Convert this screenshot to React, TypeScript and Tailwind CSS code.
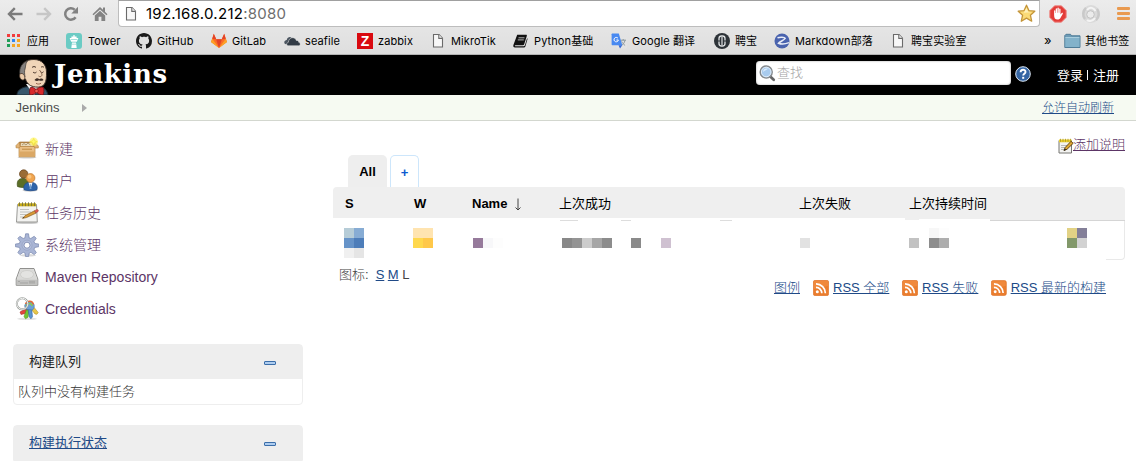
import React from "react";

const UI = "font-['Inter','Noto_Sans_CJK_SC',sans-serif]";
const BODY = "font-['Liberation_Sans','Noto_Sans_CJK_SC',sans-serif]";

/* ---------- browser icons ---------- */

function Back({ light }: { light?: boolean }) {
  return (
    <svg width="16" height="14" viewBox="0 0 16 14" fill="none" stroke={light ? "#c6c6c6" : "#7b7b7b"} strokeWidth="2.4">
      <path d={light ? "M0.5 7H14M8.2 1.2L14 7l-5.8 5.8" : "M15.5 7H2M7.8 1.2L2 7l5.8 5.8"} />
    </svg>
  );
}

function Reload() {
  return (
    <svg width="16" height="16" viewBox="0 0 16 16">
      <path d="M12.6 11.2A5.7 5.7 0 1 1 11.7 3.7" fill="none" stroke="#828282" strokeWidth="2.5" />
      <path d="M15 0.8V7.5H8.3z" fill="#828282" />
    </svg>
  );
}

function Home() {
  return (
    <svg width="16" height="16" viewBox="0 0 16 16" fill="#838383">
      <path d="M8 1L0.5 8.2l1 1.1L8 3.4l6.5 5.9 1-1.1L13 5.8V1.5h-2v2.3z" />
      <path d="M8 4.8L2.8 9.5V15h3.8v-4.3h2.8V15h3.8V9.5z" />
    </svg>
  );
}

function Page() {
  return (
    <svg width="12" height="16" viewBox="0 0 12 16" fill="#f7f7f7" stroke="#6a6a6a" strokeWidth="1.1">
      <path d="M1.500 1.500h5.500l3.500 3.700v8.800h-9z" />
      <path d="M6.800 1.500v3.900h3.700" />
    </svg>
  );
}

function AppsGrid() {
  const colors = ["#f23b3b", "#f23b3b", "#f23b3b", "#1f9d57", "#2f86f5", "#f5a623", "#1f9d57", "#f5a623", "#f5a623"];
  return (
    <svg width="14" height="14" viewBox="0 0 14 14">
      {colors.map((c, i) => (
        <rect key={i} x={(i % 3) * 5} y={Math.floor(i / 3) * 5} width="3" height="3" fill={c} />
      ))}
    </svg>
  );
}

function Tower() {
  return (
    <svg width="16" height="16" viewBox="0 0 16 16">
      <rect width="16" height="16" rx="3" fill="#6bcbc4" />
      <path d="M7.4 2h1.2v1.5h2v1.6h1.8l-1.6 3.6H5.2L3.6 5.1h1.8V3.5h2z" fill="#fff" />
      <path d="M6 9.4h4l.7 5.6H5.3z" fill="#fff" />
      <path d="M4.8 6.5h6.4M5.8 11.2h4.4" stroke="#6bcbc4" strokeWidth=".6" />
    </svg>
  );
}

function GitHub() {
  return (
    <svg width="16" height="16" viewBox="0 0 16 16" fill="#1b1b1b">
      <path d="M8 0C3.58 0 0 3.58 0 8c0 3.54 2.29 6.53 5.47 7.59.4.07.55-.17.55-.38 0-.19-.01-.82-.01-1.49-2.01.37-2.53-.49-2.69-.94-.09-.23-.48-.94-.82-1.13-.28-.15-.68-.52-.01-.53.63-.01 1.08.58 1.23.82.72 1.21 1.87.87 2.33.66.07-.52.28-.87.51-1.07-1.78-.2-3.64-.89-3.64-3.95 0-.87.31-1.59.82-2.15-.08-.2-.36-1.02.08-2.12 0 0 .67-.21 2.2.82.64-.18 1.32-.27 2-.27s1.36.09 2 .27c1.53-1.04 2.2-.82 2.2-.82.44 1.1.16 1.92.08 2.12.51.56.82 1.27.82 2.15 0 3.07-1.87 3.75-3.65 3.95.29.25.54.73.54 1.48 0 1.07-.01 1.93-.01 2.2 0 .21.15.46.55.38A8.01 8.01 0 0 0 16 8c0-4.42-3.58-8-8-8z" />
    </svg>
  );
}

function GitLab() {
  return (
    <svg width="16" height="16" viewBox="0 0 16 16">
      <path d="M8 15L0 9l2.8-8.3L5.3 6.2h5.4l2.5-5.500L16 9z" fill="#fc6d26" />
      <path d="M8 15L5.1 6.2h5.8z" fill="#e24329" />
      <path d="M8 15L0 9l1.2-3.2zM8 15l8-6-1.2-3.2z" fill="#fca326" />
      <path d="M1.3 5.8L2.8.7l2.4 5.5zM14.7 5.8L13.2.7l-2.4 5.5z" fill="#e24329" />
    </svg>
  );
}

function Clouds() {
  return (
    <svg width="17" height="16" viewBox="0 0 17 16">
      <path d="M0.3 9.8C0 7.800 1.800 7 2.700 7C3.500 4 6 3.500 7.500 4.600L3 11C1.300 11.500.5 10.800.3 9.800z" fill="#4b5560" />
      <path d="M4.200 12.700C2.200 12.700 2.200 9.700 4.300 9.300C4.600 6.600 6.300 4.700 8.700 4.700C10.700 4.700 11.800 5.900 12.300 7.500C14 7.200 14.700 8.300 14.700 9.300C16.600 9.500 16.800 12.700 14.700 12.700z" fill="#333c46" stroke="#e5e5e5" strokeWidth=".5" />
    </svg>
  );
}

function Book() {
  return (
    <svg width="15" height="16" viewBox="0 0 15 16">
      <path d="M4.200 1.800h8.800c.8 0 1 .5.8 1.100l-2.600 8.300c-.2.700-.7 1-1.400 1H2.400c-.8.1-.8 1 0 1h8.200c.7 0 1.100-.4 1.300-1l2.200-7c.5.3.5.8.3 1.400l-2 6.600c-.3 1-1 1.300-1.900 1.300H2C.500 14.500 0 13.300.4 12z" fill="#111" />
      <path d="M5.500 4.800h6M4.800 6.900h6" stroke="#ddd" strokeWidth=".8" />
    </svg>
  );
}

function Translate() {
  return (
    <svg width="17" height="16" viewBox="0 0 17 16">
      <rect x="5.500" y="4" width="10.500" height="11.500" rx="1" fill="#e3e3e3" />
      <path d="M9.500 7.200h5.500M12.200 6v1.200M14 7.400c-.6 2.600-2 4-3.600 5M10.700 8.400c.9 1.900 2 3 3.400 4" stroke="#8b979c" fill="none" />
      <path d="M1 .5h6.800l3.500 11.800H1.600c-.6 0-1-.4-1-1V1.200z" fill="#4889f1" />
      <path d="M7.500 12.300h3.800L9 15.500z" fill="#3367d6" />
      <path d="M7 5.300A2.200 2.200 0 1 0 7.400 7H5.400" fill="none" stroke="#fff" strokeWidth="1" />
    </svg>
  );
}

function Coin() {
  return (
    <svg width="16" height="16" viewBox="0 0 16 16">
      <circle cx="8" cy="8" r="8" fill="#2d3338" />
      <rect x="5" y="3" width="6" height="10" rx="2.500" fill="none" stroke="#dfe2e4" strokeWidth="1.300" />
      <path d="M8 4v8" stroke="#dfe2e4" strokeWidth="1.200" />
      <path d="M4 8h2M10 8h2" stroke="#2d3338" strokeWidth="1.200" />
    </svg>
  );
}

function MarkdownLogo() {
  return (
    <svg width="16" height="16" viewBox="0 0 16 16">
      <circle cx="8" cy="8" r="7.500" fill="#4a63ae" />
      <path d="M3.500 4.800C6 3.800 10.500 4 11.300 5.300C10.500 7 6 8.500 4.500 10.200C7 11.300 11 11.200 15 9.600" fill="none" stroke="#e8ecf6" strokeWidth="1.500" />
    </svg>
  );
}

function Folder() {
  return (
    <svg width="17" height="16" viewBox="0 0 17 16">
      <path d="M.8 14.500V2.500L2 1.300h4.500l1.200 1.500h8.300v11.700z" fill="#6c9ab5" stroke="#4f7c97" />
      <path d="M1.300 5h14.200v9H1.300z" fill="#83b2ca" />
      <path d="M1.300 4.500h14.200" stroke="#a9cddd" />
    </svg>
  );
}

function Star() {
  return (
    <svg width="19" height="19" viewBox="0 0 19 19">
      <path d="M9.500 1.200l2.400 5.400 5.900.6-4.400 4 1.300 6-5.200-3.100-5.200 3.100 1.300-6-4.400-4 5.900-.6z" fill="#fbdb78" stroke="#c4953a" strokeWidth="1.300" strokeLinejoin="round" />
      <path d="M9.500 3.800l1.600 3.900 3.700.5-8 .6z" fill="#fff0b8" />
    </svg>
  );
}

function AdBlock() {
  return (
    <svg width="18" height="18" viewBox="0 0 18 18">
      <path d="M5.600.8h6.800l4.800 4.800v6.800l-4.800 4.800H5.600L.8 12.400V5.600z" fill="#e33b37" stroke="#ee8a86" strokeWidth="1" />
      <path d="M5.100 10V5.800c0-.9 1.200-.9 1.200 0V8h.4V4c0-1 1.300-1 1.300 0v3.700h.4V3.200c0-1 1.400-1 1.400 0v4.500h.4V4.300c0-1 1.300-1 1.300 0v5.200l1.200-1.400c.7-.7 1.500 0 1 .8l-2 3.600c-.7 1.500-1.700 2-3.200 2C6 14.500 5.100 13 5.100 10z" fill="#fff" />
    </svg>
  );
}

function GreyDisc() {
  return (
    <svg width="20" height="20" viewBox="0 0 20 20">
      <circle cx="10" cy="10" r="9" fill="#dadada" />
      <path d="M4 15A8 8 0 0 1 5 4M16 5a8 8 0 0 1-1 11" stroke="#c9c9c9" fill="none" strokeWidth="2.500" />
      <circle cx="9.500" cy="10.500" r="3.800" fill="#ebebeb" stroke="#c2c2c2" />
      <path d="M6 6C9 2 13 4 14.500 7M14 14c-2 3-6 4-8 2" stroke="#f4f4f4" fill="none" strokeWidth="2" />
    </svg>
  );
}

/* ---------- page icons ---------- */

function Butler() {
  return (
    <svg width="34" height="37" viewBox="0 0 34 37">
      <path d="M1 37c0-4 3-6.500 8-8l13-1c6 1 9 4 10 9z" fill="#37566b" stroke="#1d2a33" />
      <path d="M10 26l8 11 6-9-6-2z" fill="#f2f2f2" />
      <path d="M5 12C5 5 10 1.500 18 1.500c8 0 12.500 5.500 12.500 12.500 0 5 0 9-2 12-2 2.800-5 3.500-9 3-5-.6-8.500-3-10-8C6.500 20 5 17 5 12z" fill="#f0d5b8" stroke="#3a2f28" strokeWidth="1" />
      <path d="M4 17C2.500 9 7 4.500 11.500 3 9 6 10 8 9 11c-.8 2-.4 5 0 8-2.500 1-4 .2-5-2z" fill="#85817e" stroke="#3a3532" strokeWidth=".7" />
      <path d="M5 15.500c-2 0-2 5 1 6.300 2 .8 3.500-1 2.500-4-.7-1.700-2-2.500-3.500-2.300z" fill="#eccba9" stroke="#4a372b" strokeWidth=".8" />
      <path d="M16 9.500c1-1.200 3-1.200 4 0M25 9.300c.8-.8 2-.8 3 0M17 14c1 1.200 2.500 1.200 3.500 0M25 13.800c.7 1 1.700 1 2.500 0" stroke="#463329" fill="none" strokeWidth="1" />
      <path d="M23.500 12c2 3 3.500 5 1.500 6.500-1 .4-2 0-2.500-.5" fill="none" stroke="#80604a" />
      <path d="M18.500 22c1.500-2 3.500-2.200 4.700-.8 1.500-1 3.300-.7 4.300.8-1.500 1.200-3.500 1-4.500.3-1.300.9-3.300.8-4.500-.3z" fill="#3c2c24" />
      <path d="M20 25.300c1.500 1 3.500 1 5 0" stroke="#9a6650" fill="none" />
      <path d="M14.500 29.500c2-.5 4 .5 5.500 2 2-2 5-3 7.500-2 .7 2.500.5 5.500-.5 7.500-2.500 0-4.500-.8-6.500-2.500C18.500 36 16.500 37 14 37c-.8-2.500-.6-5.500.5-7.500z" fill="#d7282b" stroke="#701015" strokeWidth=".8" />
      <circle cx="20.500" cy="33" r="1.800" fill="#ef5a50" stroke="#701015" strokeWidth=".6" />
    </svg>
  );
}

function Magnifier() {
  return (
    <svg width="17" height="17" viewBox="0 0 17 17">
      <path d="M11.500 11.800l3.200 2.900" stroke="#666" strokeWidth="2.800" strokeLinecap="round" />
      <circle cx="7.200" cy="7" r="6" fill="#a8cbee" stroke="#85898c" strokeWidth="1.500" />
      <circle cx="7.200" cy="7" r="4.800" fill="none" stroke="#e6eff8" strokeWidth=".9" />
      <path d="M4 7c0-3 3-4 5-3.200C8 5 5.500 5.500 4 7z" fill="#dcecfb" />
    </svg>
  );
}

function Help() {
  return (
    <svg width="16" height="16" viewBox="0 0 16 16">
      <circle cx="8" cy="8" r="7.300" fill="#3465a4" stroke="#dbe6f3" strokeWidth="1" />
      <path d="M5.600 6.200C5.600 3 10.500 3 10.500 5.900c0 1.900-2.300 1.900-2.300 3.700" fill="none" stroke="#fff" strokeWidth="1.900" />
      <rect x="7.200" y="10.800" width="2" height="2" fill="#fff" />
    </svg>
  );
}

function Notepad({ size }: { size: number }) {
  return (
    <svg width={size} height={size} viewBox="0 0 24 24">
      <ellipse cx="12" cy="21.800" rx="11.500" ry="1.300" fill="#ccc" />
      <path d="M2.500 3.500h19l.8 17.500H1.500z" fill="#f3f3f1" stroke="#8f8f8b" strokeWidth=".9" />
      <path d="M3 2.300h18v3H3z" fill="#c5aa18" />
      <path d="M4.500 1.300v3.800M7.500 1.300v3.800M10.500 1.300v3.800M13.500 1.300v3.800M16.500 1.300v3.800M19.500 1.300v3.800" stroke="#77733c" strokeWidth=".9" />
      <path d="M5 8.500h9M5 11h11M5 13.500h6M5 16h3" stroke="#bcbcb8" strokeWidth=".9" />
      <path d="M7.500 17.300l2.700-2.800 9.500-4.800 1.300 2.400-9.600 4.500z" fill="#d99a35" stroke="#8a5a16" strokeWidth=".7" />
      <path d="M19.600 9.700l2.300-1.200c1.500-.2 2 1.400.9 2.300l-2 1.300z" fill="#e05a50" stroke="#99403a" strokeWidth=".5" />
      <path d="M7.500 17.300l1.300-1.300.6.900z" fill="#333" />
    </svg>
  );
}

function EditNote() {
  return (
    <svg width="16" height="16" viewBox="0 0 16 16">
      <path d="M1 2.500h12.500v12.500H1z" fill="#f3f3f1" stroke="#777772" />
      <path d="M1 1.500h12.500v2.800H1z" fill="#ecd02c" />
      <path d="M2.500.800v3M5 .800v3M7.500.800v3M10 .800v3M12.500.800v3" stroke="#a8931f" strokeWidth=".8" />
      <path d="M3 7.500h6M3 9.500h4M3 11.500h3" stroke="#b8b8b4" />
      <path d="M6 12.500l1.200-3L13 3.300l2.200 2L9 11.300z" fill="#dfa832" stroke="#5a3c10" strokeWidth=".9" />
      <path d="M5.700 13l1-2.500 1.500 1.300z" fill="#222" />
    </svg>
  );
}

function BoxIcon() {
  return (
    <svg width="24" height="24" viewBox="0 0 24 24">
      <ellipse cx="12" cy="20.300" rx="9.500" ry="1.300" fill="#d0d0d0" />
      <path d="M4.500 5h15l1 4.500h-17z" fill="#b98a4d" stroke="#9c6a2a" strokeWidth=".6" />
      <path d="M6 6h11l1 3.200H5.500z" fill="#ead9b8" />
      <path d="M7 8l2-1.500L11 8l2-2 2.500 2" stroke="#a18b62" fill="none" strokeWidth=".8" />
      <path d="M4 9.500h16v10.300H4z" fill="#eabf85" stroke="#b98743" strokeWidth=".7" />
      <path d="M4.400 14.500h15.200v5H4.400z" fill="#dba865" />
      <path d="M4.500 5L1 8.500v2.300l3 .2 1-1.500zM19.500 5L23.300 9v2L20 11l-1-1.500z" fill="#e3b475" stroke="#b07d3a" strokeWidth=".6" />
      <path d="M7 12.300h10" stroke="#cb9a55" strokeWidth="1.400" />
      <circle cx="18.700" cy="4.700" r="4.300" fill="#fdf36a" opacity=".7" />
      <path d="M18.700 1.400l1 2.300 2.500 1-2.500 1-1 2.500-1.100-2.500-2.400-1 2.400-1z" fill="#fff86b" stroke="#f2e53a" strokeWidth=".7" />
    </svg>
  );
}

function UsersIcon() {
  return (
    <svg width="24" height="24" viewBox="0 0 24 24">
      <ellipse cx="15" cy="21.300" rx="7.500" ry="1.500" fill="#ccc" />
      <path d="M2.500 17.500C1.500 12 3.500 9.500 8 9.500c4 0 6 2 6 8-3 1.300-8.500 1.300-11.500 0z" fill="#5b6e27" stroke="#3d4e18" strokeWidth=".7" />
      <circle cx="8.700" cy="5" r="4.200" fill="#9a6c36" stroke="#66421b" strokeWidth=".7" />
      <path d="M9 20.700c-1-4.500 1.500-7.400 6.500-7.400s7.500 2.900 6.500 7.400c-3 1.300-10 1.300-13 0z" fill="#2e64aa" stroke="#204a87" strokeWidth=".7" />
      <path d="M13.500 13.500l2 6.500 2-6.500z" fill="#f4f7fa" />
      <path d="M15.200 15l-.7 5h2l-.7-5z" fill="#729fcf" />
      <circle cx="15.500" cy="9" r="4.400" fill="#f1a54f" stroke="#bd742a" strokeWidth=".7" />
      <circle cx="14.500" cy="7.700" r="2" fill="#f8c581" />
    </svg>
  );
}

function GearIcon() {
  return (
    <svg width="24" height="24" viewBox="0 0 24 24">
      <ellipse cx="13" cy="22.300" rx="8" ry="1.200" fill="#d9d9d9" />
      <path
        d="M10.600.8h2.900l.6 4 1.700.7 3.400-2.200 2 2-2.200 3.300.8 1.900 4 .6v2.600l-4 .7-.8 1.800 2.300 3.400-2 2-3.400-2.300-1.700.8-.6 3.500h-3l-.6-3.600-1.800-.7-3.300 2.300-2-2 2.200-3.400-.7-1.800-4-.7v-2.600l4-.6.7-1.900-2.200-3.300 2-2 3.300 2.200 1.800-.7z"
        fill="#a9b5d5"
        stroke="#7f8db3"
        strokeWidth=".8"
      />
      <circle cx="12" cy="12.200" r="5" fill="#b4bfdc" stroke="#909dc0" strokeWidth=".6" />
      <circle cx="12" cy="12.200" r="3" fill="#fff" stroke="#7382aa" strokeWidth=".8" />
    </svg>
  );
}

function DriveIcon() {
  return (
    <svg width="24" height="24" viewBox="0 0 24 24">
      <path d="M5 3.500h14L22.800 14v6.300H1.200V14z" fill="#e6e6e4" stroke="#858582" strokeWidth=".9" />
      <path d="M5.700 4.300h12.600L22 14H2z" fill="#d9d9d7" />
      <ellipse cx="12" cy="9.500" rx="6.500" ry="4" fill="#e3e3e1" stroke="#c6c6c3" strokeWidth=".6" />
      <path d="M1.700 14.500h20.600v5.300H1.700z" fill="#c0c0be" />
      <path d="M4 16v2M5.500 18h8" stroke="#8b8b88" strokeWidth="1" strokeDasharray="1 1" />
      <path d="M15 15.800v2.800M17 15.800v2.800M19 15.800v2.800" stroke="#929290" strokeWidth=".8" />
    </svg>
  );
}

function KeysIcon() {
  return (
    <svg width="24" height="24" viewBox="0 0 24 24">
      <ellipse cx="12" cy="21.800" rx="10" ry="1.300" fill="#e2e2e2" />
      <path d="M14.500 10l5.500 7 2 .3 1.200-1.800-5.700-7z" fill="#e8c84a" stroke="#a98410" strokeWidth=".5" />
      <path d="M12 10.500L5 15l1 2.500 4.500-1 3.500-4.500z" fill="#e0453c" stroke="#9e211c" strokeWidth=".5" />
      <path d="M11.500 12.500L9 19.500l1.500 2.300 2.500-1.500 1-7z" fill="#72c631" stroke="#4a8c13" strokeWidth=".5" />
      <path d="M13 12l1.200 8 1.800 1.800 1.500-2-.8-8z" fill="#5b93cf" stroke="#275893" strokeWidth=".5" />
      <path d="M9.500 9c1.500-5 7.500-5.500 9.500-1.500.8 2 0 4-1.500 5.500l-6-.5z" fill="#6ba0d6" stroke="#386da6" strokeWidth=".5" />
      <path d="M10.500 7c2-4 7-3.500 8 .5" fill="none" stroke="#e46a35" strokeWidth="1.500" />
      <path d="M11 9c2-3.500 5-3.200 6.500 0" fill="none" stroke="#8dca46" strokeWidth="1.400" />
      <circle cx="7.300" cy="6.800" r="5.500" fill="none" stroke="#989c98" strokeWidth="2" />
      <circle cx="7.300" cy="6.800" r="5.500" fill="none" stroke="#f0f1f0" strokeWidth="1" />
    </svg>
  );
}

function Rss() {
  return (
    <svg width="16" height="16" viewBox="0 0 16 16">
      <rect x=".3" y=".3" width="15.400" height="15.400" rx="2" fill="#ea7d2e" stroke="#dd6e22" strokeWidth=".6" />
      <path d="M1 1h14v5L1 9z" fill="#f5964a" opacity=".5" />
      <circle cx="4.300" cy="11.800" r="1.500" fill="#fff" />
      <path d="M3 7.300a5.800 5.800 0 0 1 5.800 5.900M3 3.800a9.400 9.400 0 0 1 9.400 9.400" fill="none" stroke="#fff" strokeWidth="1.700" />
    </svg>
  );
}

/* ---------- chrome ---------- */

type Mark = { w: string; slot: string; label: string; icon: React.ReactNode };

const marks: Mark[] = [
  { w: "w-[59px]", slot: "w-5", label: "应用", icon: <AppsGrid /> },
  { w: "w-[70px]", slot: "w-[22px]", label: "Tower", icon: <Tower /> },
  { w: "w-[75px]", slot: "w-[21px]", label: "GitHub", icon: <GitHub /> },
  { w: "w-[73px]", slot: "w-[21px]", label: "GitLab", icon: <GitLab /> },
  { w: "w-[73px]", slot: "w-[21px]", label: "seafile", icon: <Clouds /> },
  {
    w: "w-[75px]",
    slot: "w-[21px]",
    label: "zabbix",
    icon: (
      <span className="flex size-4 items-center justify-center bg-[#d9090f] font-['Liberation_Sans',sans-serif] text-[14px] font-bold leading-none text-white">Z</span>
    ),
  },
  { w: "w-[81px]", slot: "w-[19px]", label: "MikroTik", icon: <Page /> },
  { w: "w-[98px]", slot: "w-[21px]", label: "Python基础", icon: <Book /> },
  { w: "w-[103px]", slot: "w-[21px]", label: "Google 翻译", icon: <Translate /> },
  { w: "w-[60px]", slot: "w-[21px]", label: "聘宝", icon: <Coin /> },
  { w: "w-[118px]", slot: "w-[21px]", label: "Markdown部落", icon: <MarkdownLogo /> },
  { w: "w-[152px]", slot: "w-[19px]", label: "聘宝实验室", icon: <Page /> },
];

function Chrome() {
  return (
    <div className={`${UI} flex h-[55px] flex-col border-b border-[#b3b3b3] bg-linear-to-b from-[#ececec] to-[#dedede]`}>
      <div className="flex h-[27px] shrink-0 items-center pl-[7px]">
        <span className="w-[29px]"><Back /></span>
        <span className="w-[27px]"><Back light /></span>
        <span className="w-[29px]"><Reload /></span>
        <span className="w-[26px]"><Home /></span>
        <div className="flex h-[27px] w-[922px] items-center rounded-b-[4px] border border-[#bdbdbd] border-t-[#a0a0a0] bg-white pl-[6px]">
          <span className="w-[21px]"><Page /></span>
          <span className="text-[15px] leading-[20px] tracking-[0.27px] text-black">
            192.168.0.212<span className="text-[#6d6d6d]">:8080</span>
          </span>
          <span className="ml-auto mr-[3px]"><Star /></span>
        </div>
        <span className="ml-[9px]"><AdBlock /></span>
        <span className="ml-[14px]"><GreyDisc /></span>
        <span className="ml-[16px] flex flex-col gap-[2px]">
          <i className="h-[3px] w-[13px] rounded-[1px] bg-[#e99a50]" />
          <i className="h-[3px] w-[13px] rounded-[1px] bg-[#e99a50]" />
          <i className="h-[3px] w-[13px] rounded-[1px] bg-[#e99a50]" />
        </span>
      </div>
      <div className="flex h-[27px] items-center pl-[7px] text-[11px] leading-[16px] text-black">
        {marks.map((m) => (
          <span key={m.label} className={`flex shrink-0 items-center whitespace-nowrap ${m.w}`}>
            <span className={`shrink-0 ${m.slot}`}>{m.icon}</span>
            <span className="tracking-[0.1px]">{m.label}</span>
          </span>
        ))}
        <span className="w-[20px] pb-[2px] text-[13px]">»</span>
        <span className="w-[21px]"><Folder /></span>
        <span className="whitespace-nowrap tracking-[0.1px]">其他书签</span>
      </div>
    </div>
  );
}

/* ---------- page ---------- */

const tasks = [
  { label: "新建", icon: <BoxIcon /> },
  { label: "用户", icon: <UsersIcon /> },
  { label: "任务历史", icon: <Notepad size={24} /> },
  { label: "系统管理", icon: <GearIcon /> },
  { label: "Maven Repository", icon: <DriveIcon /> },
  { label: "Credentials", icon: <KeysIcon /> },
];

function Collapse() {
  return <span className="mt-[2px] h-1 w-3 rounded-[1px] border border-[#3b6ea9] bg-[#aecdf0]" />;
}

function Mosaic({ cols, cells, className = "" }: { cols: string; cells: string[]; className?: string }) {
  return (
    <span className={`grid shrink-0 auto-rows-[10px] content-start ${cols} ${className}`}>
      {cells.map((c, i) => (
        <i key={i} className={c} />
      ))}
    </span>
  );
}

function Feed({ label, className }: { label: string; className: string }) {
  return (
    <span className={`flex shrink-0 items-center ${className}`}>
      <Rss />
      <a className="ml-1 underline">{label}</a>
    </span>
  );
}

export default function App() {
  return (
    <div className={`${BODY} h-[461px] w-[1136px] overflow-hidden bg-white text-[13px] font-light leading-[18px] text-[#333]`}>
      <div className="font-normal"><Chrome /></div>

      <header className="flex h-10 items-start bg-black">
        <span className="mt-[3px] ml-4 h-[37px] w-[34px] overflow-hidden"><Butler /></span>
        <span className="mt-[3px] ml-[4px] w-[120px] font-['DejaVu_Serif',serif] text-[26px] font-bold leading-[32px] tracking-[0.65px] text-white">Jenkins</span>
        <div className="mt-[6px] ml-auto flex h-6 w-[255px] items-center rounded-[4px] bg-white pl-[3px] text-[#a5a5a5] shadow-[inset_0_0_2px_#999]">
          <Magnifier />
          <span className="ml-px">查找</span>
        </div>
        <span className="mt-[11px] ml-1"><Help /></span>
        <span className="mt-[12px] mr-[17px] ml-[26px] flex items-center font-normal text-white">
          登录<i className="mx-[4px] mb-[2px] h-[10px] w-px bg-white" /><span className="ml-px">注册</span>
        </span>
      </header>

      <nav className="flex h-[26px] items-center border-b border-[#d3d7cf] bg-[#f6faf2] pl-[15.500px] text-[#4d4d4d]">
        Jenkins
        <svg className="ml-[22px]" width="5" height="8" viewBox="0 0 5 8"><path d="M0 0l5 4-5 4z" fill="#aaa" /></svg>
        <a className="mr-[22px] ml-auto text-[12px] text-[#204a87] underline">允许自动刷新</a>
      </nav>

      <div className="flex">
        <aside className="ml-[13px] w-[290px] shrink-0 pt-3">
          <ul className="pl-[2px] text-[14px] text-[#5c3566]">
            {tasks.map((t) => (
              <li key={t.label} className="flex h-8 items-center">
                {t.icon}
                <span className="ml-[6px]">{t.label}</span>
              </li>
            ))}
          </ul>
          <section className="mt-[19px] rounded-[4px] border border-[#eee]">
            <h2 className="flex h-[34px] items-center justify-between bg-[#eee] pr-[26px] pl-[15px] font-normal text-[#222]">
              构建队列<Collapse />
            </h2>
            <p className="h-[25px] pt-1 pl-1">队列中没有构建任务</p>
          </section>
          <section className="mt-5 rounded-t-[4px] border border-[#eee]">
            <h2 className="flex h-[34px] items-center justify-between bg-[#eee] pr-[26px] pl-[15px] font-normal text-[#204a87]">
              <a className="underline">构建执行状态</a><Collapse />
            </h2>
          </section>
        </aside>

        <main className="ml-[30px] w-[792px] shrink-0">
          <div className="flex h-[34px] items-center justify-end pt-[14px] text-[#5c3566]">
            <span className="mt-[2px]"><EditNote /></span>
            <a className="-ml-px underline">添加说明</a>
          </div>

          <div className="flex h-8 gap-[3px] pl-[15px] font-bold text-black">
            <span className="flex w-[39px] items-center justify-center rounded-t-[5px] bg-[#eee] pt-[2px]">All</span>
            <span className="flex w-[29px] items-center justify-center rounded-t-[5px] border border-b-0 border-[#cde6fb] pt-[2px] text-[#0b5bd0]">+</span>
          </div>

          <div className="flex h-8 items-center rounded-t-[4px] bg-[#efefef] pt-[2px] font-normal text-black">
            <span className="w-[69px] pl-3 font-bold">S</span>
            <span className="w-[58px] pl-3 font-bold">W</span>
            <span className="flex w-[87px] items-center pl-3 font-bold">
              Name
              <svg className="mt-px ml-[7px]" width="8" height="13" viewBox="0 0 8 13" fill="none" stroke="#444"><path d="M4 .5v11.500M1.500 9.500L4 12 6.500 9.500" /></svg>
            </span>
            <span className="w-[240px] pl-3">上次成功</span>
            <span className="w-[110px] pl-3">上次失败</span>
            <span className="pl-3">上次持续时间</span>
          </div>
          <div className="-mt-px flex h-[3px] items-end bg-white">
            <i className="ml-[227px] h-px w-[18px] bg-[#ddd]" />
            <i className="ml-[43px] h-px w-[10px] bg-[#ddd]" />
            <i className="ml-[89px] h-px w-3 bg-[#ddd]" />
            <i className="mb-px ml-[173px] h-[2px] w-[14px] bg-[#efefef]" />
            <i className="mb-[2px] h-px w-[71px] bg-[#efefef]" />
            <i className="h-[3px] w-[135px] border-b border-[#d5d5d5] bg-[#efefef]" />
          </div>
          <div className="flex h-[39px]">
            <Mosaic className="mt-[7px] ml-[11px]" cols="grid-cols-[10px_10px]" cells={["bg-[#b6ccd7]", "bg-[#87acd4]", "bg-[#6693c8]", "bg-[#4d7db9]", "bg-[#f0f0f0]", "bg-[#e5e5e5]"]} />
            <Mosaic className="mt-[7px] ml-[49px]" cols="grid-cols-[10px_10px]" cells={["bg-[#ffe4b0]", "bg-[#ffe4b0]", "bg-[#ffd84d]", "bg-[#ffc84a]"]} />
            <Mosaic className="mt-[17px] ml-[40px]" cols="grid-cols-[10px_10px_10px]" cells={["bg-[#967a9b]", "bg-[#f7f7f9]", "bg-[#fdfdfd]"]} />
            <Mosaic
              className="mt-[17px] ml-[59px]"
              cols="grid-cols-[10px_10px_10px_10px_10px_19px_10px_20px_10px]"
              cells={["bg-[#888]", "bg-[#949494]", "bg-[#ccc]", "bg-[#a6a6a6]", "bg-[#8c8c8c]", "", "bg-[#8a8a8a]", "", "bg-[#cfc1d1]"]}
            />
            <Mosaic className="mt-[17px] ml-[129px]" cols="grid-cols-[10px]" cells={["bg-[#e2e2e2]"]} />
            <Mosaic
              className="mt-[7px] ml-[99px]"
              cols="grid-cols-[10px_10px_10px_10px]"
              cells={["", "", "bg-[#f7f7f7]", "bg-[#fdfdfd]", "bg-[#c2c2c2]", "", "bg-[#8d8d8d]", "bg-[#adadad]"]}
            />
            <Mosaic className="mt-[7px] ml-[118px]" cols="grid-cols-[10px_10px]" cells={["bg-[#e2d285]", "bg-[#837f98]", "bg-[#82986a]", "bg-[#d2d2d2]"]} />
            <i className="ml-auto w-[19px] rounded-br-[4px] border-r border-b border-[#e9e9e9]" />
          </div>

          <div className="flex items-start text-[#204a87]">
            <span className="mt-[6px] ml-[6px] flex text-[#444]">
              图标:<span className="w-[7px]" />
              <a className="text-[#204a87] underline">S</a><span className="w-[3.500px]" />
              <a className="text-[#204a87] underline">M</a><span className="w-[3.500px]" />L
            </span>
            <span className="mt-[19px] mr-[19px] ml-auto flex whitespace-nowrap">
              <a className="underline">图例</a>
              <Feed className="ml-[13px] w-[89px]" label="RSS 全部" />
              <Feed className="w-[89px]" label="RSS 失败" />
              <Feed className="w-[115px]" label="RSS 最新的构建" />
            </span>
          </div>
        </main>
      </div>
    </div>
  );
}
